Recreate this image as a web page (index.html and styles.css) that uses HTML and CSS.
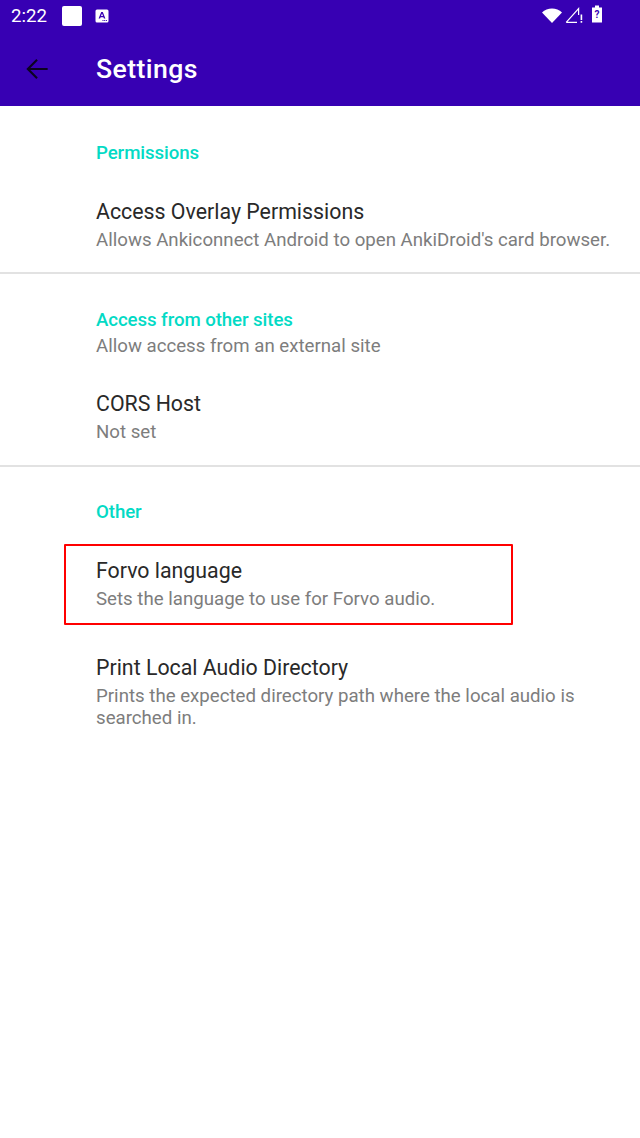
FILE: index.html
```html
<!DOCTYPE html>
<html lang="en">
  <head>
    <meta charset="utf-8" />
    <title>Settings</title>
    <link rel="stylesheet" href="styles.css">
  </head>

  <body>
    <header class="app-header">
      <div class="status-bar">
        <span class="clock">2:22</span>
        <span class="white-square"></span>
        <svg class="anki-icon" width="14" height="14" viewBox="0 0 14 14">
          <rect x="0.5" y="0.5" width="13" height="13" rx="1.5" fill="#fff"/>
          <path d="M3.6 9.6 L6.2 3 H7.8 L10.4 9.6 H8.9 L8.4 8.2 H5.6 L5.1 9.6 Z M6 7 H8 L7 4.4 Z" fill="#3700b3" fill-rule="evenodd"/>
          <path d="M7.5 11 h1 v1 h-1z M9.2 11 h1 v1 h-1z M10.9 11 h1 v1 h-1z" fill="#3700b3"/>
        </svg>
        <span class="status-right">
          <svg class="wifi" width="20" height="15" viewBox="0 0 20 15"><path d="M0 4.4 C5.2 -0.9 14.8 -0.9 20 4.4 L10 15 Z" fill="#fff"/></svg>
          <svg class="signal" width="18" height="17" viewBox="0 0 18 17">
            <path d="M1.2 16.3 L13.6 2.5 V9 M1.2 16.3 H12" fill="none" stroke="#fff" stroke-width="1.2"/>
            <path d="M15.6 8.5 h1.6 v5.5 h-1.6z M15.6 15 h1.6 v1.8 h-1.6z" fill="#fff"/>
          </svg>
          <svg class="battery" width="10" height="18" viewBox="0 0 10 18">
            <path d="M3 0.5 h4 v2 h3 v15 h-10 v-15 h3z" fill="#fff"/>
            <text x="5" y="13" class="battery-mark">?</text>
          </svg>
        </span>
      </div>
      <div class="toolbar">
        <svg class="back-arrow" width="32" height="32" viewBox="0 0 24 24">
          <path d="M20 11.2H7l5.6-5.6L11.5 4.5 4 12l7.5 7.5 1.1-1.1L7 12.8h13v-1.6z" fill="#0b0320"/>
        </svg>
        <h1>Settings</h1>
      </div>
    </header>

    <main>
      <section class="group">
        <h2 class="group-title">Permissions</h2>
        <div class="pref">
          <div class="pref-title">Access Overlay Permissions</div>
          <div class="pref-summary">Allows Ankiconnect Android to open AnkiDroid's card browser.</div>
        </div>
      </section>

      <section class="group">
        <h2 class="group-title with-summary">Access from other sites</h2>
        <div class="pref-summary">Allow access from an external site</div>
        <div class="pref">
          <div class="pref-title">CORS Host</div>
          <div class="pref-summary">Not set</div>
        </div>
      </section>

      <section class="group">
        <h2 class="group-title">Other</h2>
        <div class="pref highlighted">
          <div class="pref-title">Forvo language</div>
          <div class="pref-summary">Sets the language to use for Forvo audio.</div>
          <div class="red-box"></div>
        </div>
        <div class="pref">
          <div class="pref-title">Print Local Audio Directory</div>
          <div class="pref-summary">Prints the expected directory path where the local audio is searched in.</div>
        </div>
      </section>
    </main>
  </body>
</html>
```

FILE: styles.css
```css
html, body {
  margin: 0;
  padding: 0;
}
body {
  width: 640px;
  height: 1138px;
  overflow: hidden;
  background-color: #fff;
  font-family: Roboto, "Liberation Sans", sans-serif;
}
.app-header {
  height: 106px;
  background-color: #3700b3;
  color: #fff;
}
.status-bar {
  height: 32px;
  display: flex;
  align-items: center;
  padding: 0 38px 0 11px;
}
.clock {
  font-size: 18.67px;
  line-height: 32px;
  width: 51px;
}
.white-square {
  width: 20px;
  height: 20px;
  border-radius: 2px;
  background-color: #fff;
  margin-right: 13px;
}
.status-right {
  margin-left: auto;
  margin-bottom: 4px;
  display: flex;
  align-items: flex-end;
}
.status-right svg, .anki-icon {
  display: block;
}
.wifi {
  margin-right: 3px;
}
.signal {
  margin-right: 9px;
}
.battery-mark {
  font-size: 10px;
  font-weight: 700;
  text-anchor: middle;
  fill: #3700b3;
}
.toolbar {
  height: 74px;
  display: flex;
  align-items: center;
  padding-left: 21px;
}
.toolbar h1 {
  margin: 0 0 0 43px;
  font-size: 26.67px;
  font-weight: 500;
  letter-spacing: 0.4px;
}
.group {
  padding: 0 0 11.2px 96px;
  border-bottom: 2px solid #e2e2e2;
}
.group:last-child {
  border-bottom: none;
}
.group-title {
  margin: 0;
  padding-top: 34.5px;
  font-size: 18.67px;
  font-weight: 500;
  line-height: 22px;
  letter-spacing: -0.08px;
  color: #03dac5;
}
.group:first-child .group-title {
  padding-top: 36.1px;
}
.group-title.with-summary {
  margin-bottom: 1.5px;
}
.with-summary + .pref-summary {
  margin-bottom: -1px;
}
.pref {
  position: relative;
  padding: 33.8px 0 10px;
}
.pref-title {
  font-size: 21.33px;
  line-height: 28px;
  color: #292929;
}
.pref-summary {
  font-size: 18.67px;
  line-height: 22px;
  color: #7d7d7d;
  padding-top: 3.2px;
  padding-right: 26px;
}
.red-box {
  position: absolute;
  left: -32px;
  top: 20.8px;
  width: 445px;
  height: 77px;
  border: 2px solid #f00;
  border-radius: 1px;
}
```
